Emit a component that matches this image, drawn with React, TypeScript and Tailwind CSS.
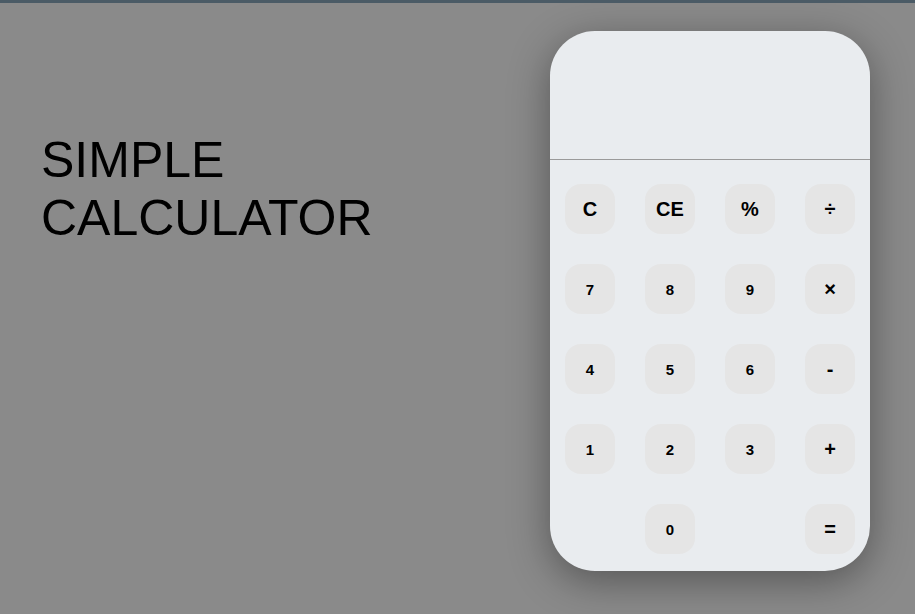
import React from "react";

const rows: { label: string; size: string }[][] = [
  [
    { label: "C", size: "text-[20px]" },
    { label: "CE", size: "text-[20px]" },
    { label: "%", size: "text-[20px]" },
    { label: "÷", size: "text-[20px]" },
  ],
  [
    { label: "7", size: "text-[15px] pt-[2px]" },
    { label: "8", size: "text-[15px] pt-[2px]" },
    { label: "9", size: "text-[15px] pt-[2px]" },
    { label: "×", size: "text-[20px]" },
  ],
  [
    { label: "4", size: "text-[15px] pt-[2px]" },
    { label: "5", size: "text-[15px] pt-[2px]" },
    { label: "6", size: "text-[15px] pt-[2px]" },
    { label: "-", size: "text-[20px]" },
  ],
  [
    { label: "1", size: "text-[15px] pt-[2px]" },
    { label: "2", size: "text-[15px] pt-[2px]" },
    { label: "3", size: "text-[15px] pt-[2px]" },
    { label: "+", size: "text-[20px]" },
  ],
  [
    { label: "", size: "" },
    { label: "0", size: "text-[15px] pt-[2px]" },
    { label: "", size: "" },
    { label: "=", size: "text-[20px]" },
  ],
];

export default function App() {
  return (
    <div
      className="w-[915px] h-[614px] bg-[#8a8a8a] border-t-[3px] border-[#4b5b66] flex overflow-hidden"
      style={{ fontFamily: '"Liberation Sans", Arial, sans-serif' }}
    >
      <div className="pl-[41px] pt-[128px]">
        <h1 className="text-[50px] leading-[58px] font-normal text-black">
          SIMPLE
          <br />
          CALCULATOR
        </h1>
      </div>
      <div className="ml-auto mr-[45px] mt-[28px] w-[320px] h-[540px] rounded-[45px] bg-[#e9ecef] shadow-[0_10px_40px_rgba(0,0,0,0.38)] flex flex-col overflow-hidden">
        <div className="h-[129px] border-b border-[#9a9a9a] shrink-0"></div>
        <div className="px-[15px] pt-[24px] grid grid-cols-4 gap-x-[30px] gap-y-[30px]">
          {rows.flat().map((b, i) =>
            b.label ? (
              <button
                key={i}
                className={`w-[50px] h-[50px] rounded-[16px] bg-[#e5e5e5] font-bold text-black flex items-center justify-center ${b.size}`}
              >
                {b.label}
              </button>
            ) : (
              <div key={i} className="w-[50px] h-[50px]"></div>
            )
          )}
        </div>
      </div>
    </div>
  );
}
